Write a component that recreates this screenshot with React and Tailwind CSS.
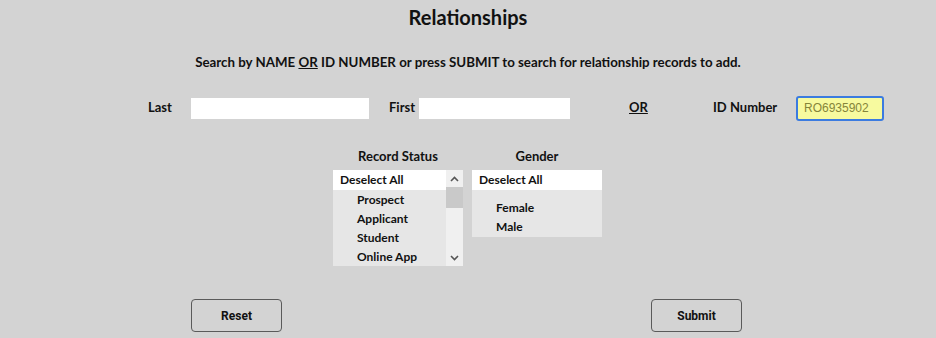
import React from "react";

const F = { fontFamily: "Lato, 'Noto Sans', sans-serif" };

function Label({ children, w }) {
  return <div className={`${w} shrink-0 text-[13px] font-bold text-[#111]`}>{children}</div>;
}

export default function App() {
  return (
    <div className="w-[936px] h-[338px] bg-[#d3d3d3] overflow-hidden" style={F}>
      <div className="pt-[5px] text-center text-[20px] font-bold text-[#111] leading-[24px]">Relationships</div>
      <div className="mt-[25px] text-center text-[13.3px] font-bold text-[#111] leading-[16px]">
        Search by NAME <span className="underline">OR</span> ID NUMBER or press SUBMIT to search for relationship records to add.
      </div>

      <div className="mt-[26px] flex items-center pl-[148px] h-[24px]">
        <Label w="w-[43px]">Last</Label>
        <input className="w-[178px] h-[21px] bg-white outline-none border-0" />
        <div className="w-[20px] shrink-0" />
        <Label w="w-[30px]">First</Label>
        <input className="w-[151px] h-[21px] bg-white outline-none border-0" />
        <div className="w-[59px] shrink-0" />
        <Label w="w-[84px]"><span className="underline">OR</span></Label>
        <Label w="w-[83px]">ID Number</Label>
        <div className="w-[88px] h-[25px] rounded-[3px] border-2 border-[#3b7be0] bg-[#f7fa9f] flex items-center pl-[6px] text-[12px] text-[#85853a]" style={{ fontFamily: "'Liberation Sans', Arial, sans-serif" }}>
          RO6935902
        </div>
      </div>

      <div className="mt-[27px] flex pl-[333px] gap-[9px]">
        <div className="w-[130px]">
          <div className="text-center text-[13px] font-bold text-[#111] leading-[16px] h-[23px] pt-[1px]">Record Status</div>
          <div className="flex h-[96px] bg-[#e6e6e6]">
            <div className="flex-1 text-[12px] font-bold text-[#111]">
              <div className="bg-white h-[20px] flex items-center pl-[7px]">Deselect All</div>
              <div className="pl-[24px] h-[19px] flex items-center">Prospect</div>
              <div className="pl-[24px] h-[19px] flex items-center">Applicant</div>
              <div className="pl-[24px] h-[19px] flex items-center">Student</div>
              <div className="pl-[24px] h-[19px] flex items-center">Online App</div>
            </div>
            <div className="w-[17px] bg-[#f0f0f0] flex flex-col">
              <div className="h-[17px] flex items-center justify-center">
                <svg width="9" height="6" viewBox="0 0 9 6"><path d="M1 5L4.5 1.5L8 5" fill="none" stroke="#555" strokeWidth="1.6" /></svg>
              </div>
              <div className="h-[21px] bg-[#c9c9c9]" />
              <div className="flex-1" />
              <div className="h-[17px] flex items-center justify-center">
                <svg width="9" height="6" viewBox="0 0 9 6"><path d="M1 1L4.5 4.5L8 1" fill="none" stroke="#555" strokeWidth="1.6" /></svg>
              </div>
            </div>
          </div>
        </div>
        <div className="w-[130px]">
          <div className="text-center text-[13px] font-bold text-[#111] leading-[16px] h-[23px] pt-[1px]">Gender</div>
          <div className="h-[67px] bg-[#e6e6e6] text-[12px] font-bold text-[#111]">
            <div className="bg-white h-[20px] flex items-center pl-[7px]">Deselect All</div>
            <div className="h-[8px]" />
            <div className="pl-[24px] h-[19px] flex items-center">Female</div>
            <div className="pl-[24px] h-[19px] flex items-center">Male</div>
          </div>
        </div>
      </div>

      <div className="mt-[33px] flex pl-[191px]">
        <button className="w-[91px] h-[33px] rounded-[4px] border border-[#5a5a5a] bg-transparent text-[12px] font-bold text-[#111]" style={{ fontFamily: "Roboto, Arial, sans-serif" }}>Reset</button>
        <div className="w-[369px]" />
        <button className="w-[91px] h-[33px] rounded-[4px] border border-[#5a5a5a] bg-transparent text-[12px] font-bold text-[#111]" style={{ fontFamily: "Roboto, Arial, sans-serif" }}>Submit</button>
      </div>
    </div>
  );
}
